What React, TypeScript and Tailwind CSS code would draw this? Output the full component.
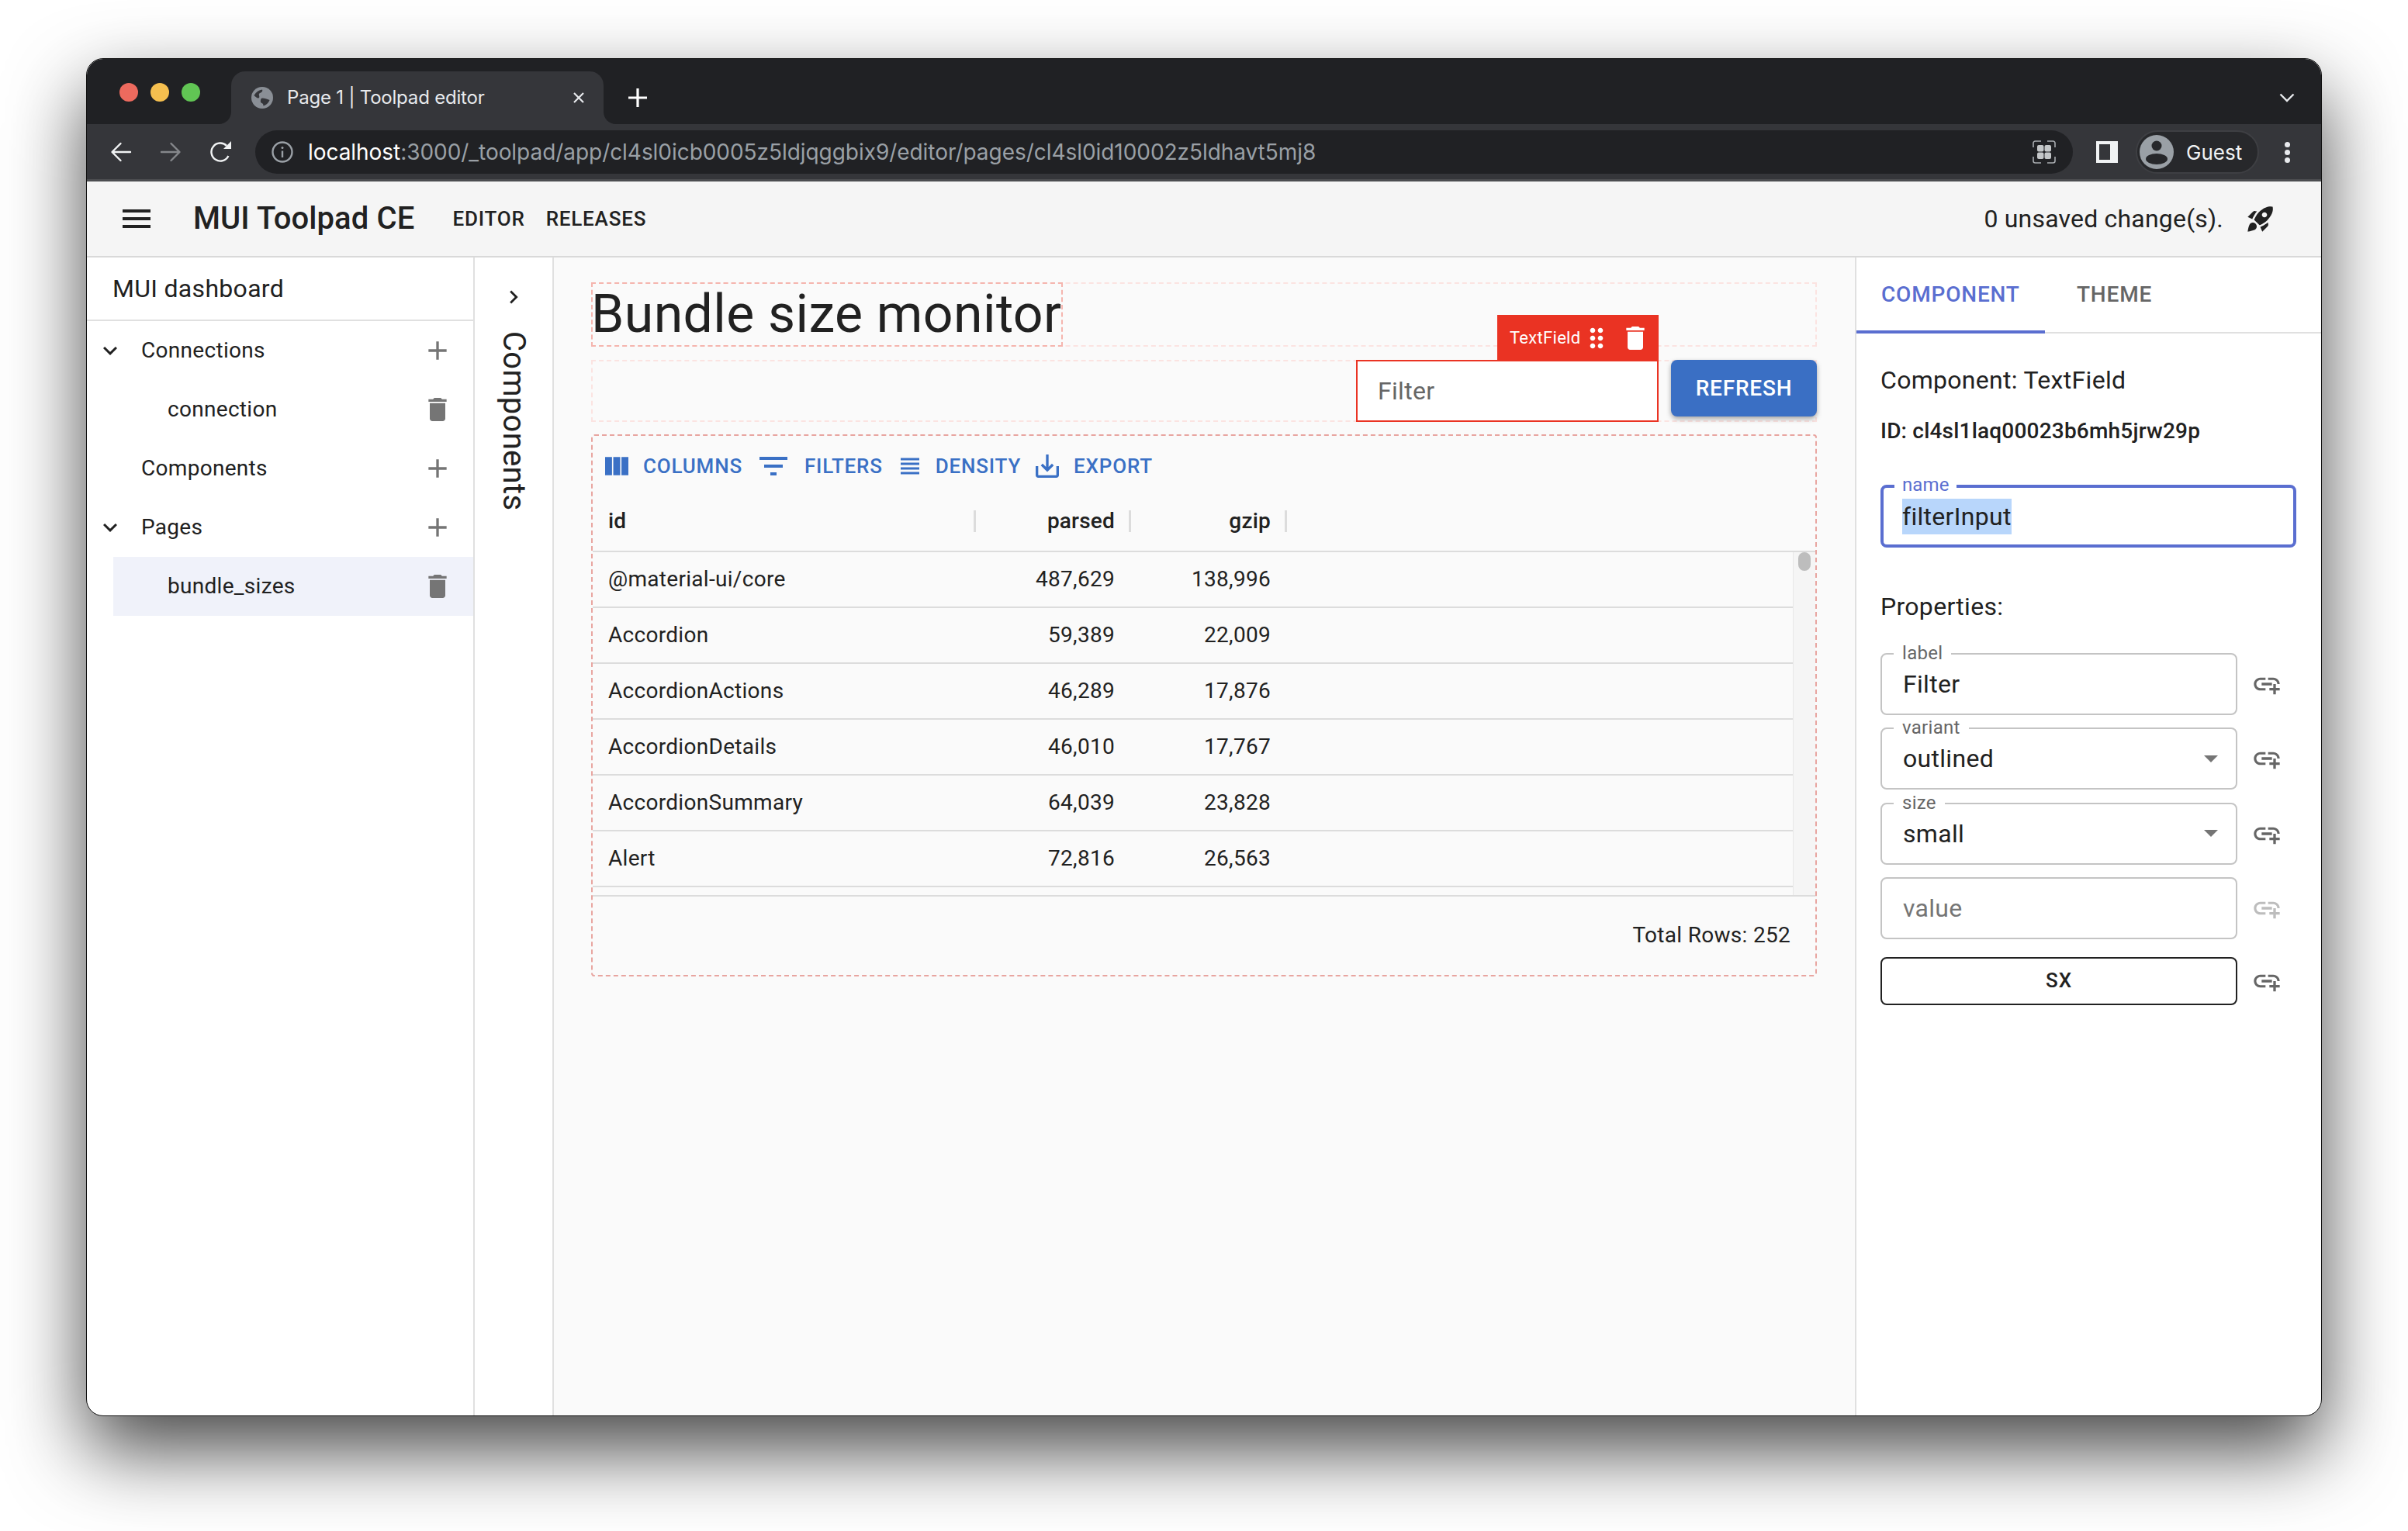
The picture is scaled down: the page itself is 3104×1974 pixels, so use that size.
import React from "react";

const P = {
  menu: "M3 18h18v-2H3v2zm0-5h18v-2H3v2zm0-7v2h18V6H3z",
  add: "M19 13h-6v6h-2v-6H5v-2h6V5h2v6h6v2z",
  del: "M6 19c0 1.1.9 2 2 2h8c1.1 0 2-.9 2-2V7H6v12zM19 4h-3.5l-1-1h-5l-1 1H5v2h14V4z",
  more: "M16.59 8.59 12 13.17 7.41 8.59 6 10l6 6 6-6z",
  right: "M10 6 8.59 7.41 13.17 12l-4.58 4.59L10 18l6-6z",
  rocket: "M9.19 6.35c-2.04 2.29-3.44 5.58-3.57 5.89L2 10.69l4.05-4.05c.47-.47 1.15-.68 1.81-.55l1.33.26zM11.17 17s3.74-1.55 5.89-3.7c5.4-5.4 4.5-9.62 4.21-10.57-.95-.3-5.17-1.19-10.57 4.21C8.55 9.09 7 12.83 7 12.83L11.17 17zm6.48-2.19c-2.29 2.04-5.58 3.44-5.89 3.57L13.31 22l4.05-4.05c.47-.47.68-1.15.55-1.81l-.26-1.33zM9 18c0 .83-.34 1.58-.88 2.12C6.94 21.3 2 22 2 22s.7-4.94 1.88-6.12C4.42 15.34 5.17 15 6 15c1.66 0 3 1.34 3 3zm4-9c0-1.1.9-2 2-2s2 .9 2 2-.9 2-2 2-2-.9-2-2z",
  cols: "M14.67 5v14H9.33V5h5.34zm1 14H21V5h-5.33v14zm-7.34 0V5H3v14h5.33z",
  filter: "M10 18h4v-2h-4v2zM3 6v2h18V6H3zm3 7h12v-2H6v2z",
  density: "M4 15h16v-2H4v2zm0 4h16v-2H4v2zm0-8h16V9H4v2zm0-6v2h16V5H4z",
  save: "M19 12v7H5v-7H3v7c0 1.1.9 2 2 2h14c1.1 0 2-.9 2-2v-7h-2zm-6 .67l2.59-2.58L17 11.5l-5 5-5-5 1.41-1.41L11 12.67V3h2z",
  drag: "M11 18c0 1.1-.9 2-2 2s-2-.9-2-2 .9-2 2-2 2 .9 2 2zm-2-8c-1.1 0-2 .9-2 2s.9 2 2 2 2-.9 2-2-.9-2-2-2zm0-6c-1.1 0-2 .9-2 2s.9 2 2 2 2-.9 2-2-.9-2-2-2zm6 4c1.1 0 2-.9 2-2s-.9-2-2-2-2 .9-2 2 .9 2 2 2zm0 2c-1.1 0-2 .9-2 2s.9 2 2 2 2-.9 2-2-.9-2-2-2zm0 6c-1.1 0-2 .9-2 2s.9 2 2 2 2-.9 2-2-.9-2-2-2z",
  link: "M8 11h8v2H8zm12.1 1H22c0-2.76-2.24-5-5-5h-4v1.9h4c1.71 0 3.1 1.39 3.1 3.1zM3.9 12c0-1.71 1.39-3.1 3.1-3.1h4V7H7c-2.76 0-5 2.24-5 5s2.24 5 5 5h4v-1.9H7c-1.71 0-3.1-1.39-3.1-3.1zM19 12h-2v3h-3v2h3v3h2v-3h3v-2h-3z",
};

function I({ d, className }: { d: string; className: string }) {
  return (
    <svg viewBox="0 0 24 24" fill="currentColor" className={"shrink-0 " + className}>
      <path d={d} />
    </svg>
  );
}

function Stroke({ children, className }: { children: React.ReactNode; className: string }) {
  return (
    <svg viewBox="0 0 28 28" fill="none" stroke="currentColor" strokeWidth="2.4" strokeLinecap="round" strokeLinejoin="round" className={"shrink-0 " + className}>
      {children}
    </svg>
  );
}

function Flare({ side }: { side: "l" | "r" }) {
  return (
    <svg
      viewBox="0 0 16 16"
      className={side === "l" ? "absolute bottom-0 -left-[16px] w-[16px] h-[16px]" : "absolute bottom-0 -right-[16px] w-[16px] h-[16px]"}
    >
      <path d={side === "l" ? "M16 0V16H0C9 16 16 9 16 0Z" : "M0 0V16H16C7 16 0 9 0 0Z"} fill="#35363a" />
    </svg>
  );
}

function TreeRow({ label, chevron }: { label: string; chevron?: boolean }) {
  return (
    <div className={chevron ? "flex items-center h-[76px] pl-[12px] pr-[26px]" : "flex items-center h-[76px] pl-[70px] pr-[26px]"}>
      {chevron && <I d={P.more} className="w-[36px] h-[36px] mr-[22px] text-[#212121]" />}
      <span className="flex-1 text-[28px] tracking-[0.3px] pb-[1px]">{label}</span>
      <I d={P.add} className="w-[40px] h-[40px] text-[#757575]" />
    </div>
  );
}

function TreeLeaf({ label, selected }: { label: string; selected?: boolean }) {
  return (
    <div className={selected ? "flex items-center h-[76px] ml-[34px] pl-[70px] pr-[26px] bg-[#f0f2fa]" : "flex items-center h-[76px] ml-[34px] pl-[70px] pr-[26px]"}>
      <span className="flex-1 text-[28px] tracking-[0.3px] pb-[1px]">{label}</span>
      <I d={P.del} className="w-[40px] h-[40px] text-[#757575]" />
    </div>
  );
}

function ToolBtn({ d, label, icon, gap }: { d: string; label: string; icon: string; gap: string }) {
  return (
    <div className="flex items-center text-[#3a70c5]">
      <I d={d} className={icon} />
      <span className={"text-[26px] font-medium tracking-[0.8px] " + gap}>{label}</span>
    </div>
  );
}

const rows = [
  ["@material-ui/core", "487,629", "138,996"],
  ["Accordion", "59,389", "22,009"],
  ["AccordionActions", "46,289", "17,876"],
  ["AccordionDetails", "46,010", "17,767"],
  ["AccordionSummary", "64,039", "23,828"],
  ["Alert", "72,816", "26,563"],
];

function Field({ label, value, placeholder, select, faint }: { label?: string; value?: string; placeholder?: string; select?: boolean; faint?: boolean }) {
  return (
    <div className="flex items-center mb-[16.4px]">
      <div className="relative flex items-center w-[460px] h-[80px] border-2 border-[#c4c4c4] rounded-[8px] pl-[27px] pr-[23px] text-[32px] tracking-[0.3px]">
        {label && (
          <span className="absolute -top-[16px] left-[15px] px-[11px] bg-white text-[24px] leading-[28px] text-[#666666]">{label}</span>
        )}
        <span className={placeholder ? "flex-1 text-[#757575]" : "flex-1"}>{value ?? placeholder}</span>
        {select && (
          <svg viewBox="0 0 20 10" className="w-[18px] h-[9px] text-[#757575]" fill="currentColor">
            <path d="M0 0h20L10 10z" />
          </svg>
        )}
      </div>
      <I d={P.link} className={faint ? "ml-[18px] w-[40px] h-[40px] text-[#bdbdbd]" : "ml-[18px] w-[40px] h-[40px] text-[#666666]"} />
    </div>
  );
}

export default function App() {
  return (
    <div className="w-[3104px] h-[1974px] overflow-hidden bg-white pt-[75px] pl-[111px] text-[#212121] font-['Roboto',sans-serif]">
      <div className="w-[2882px] h-[1751px] rounded-[22px] overflow-hidden border border-[#111111] bg-white flex flex-col shadow-[0_44px_100px_rgba(0,0,0,0.72)]">
        {/* tab strip */}
        <div className="h-[84px] shrink-0 bg-[#202124] flex items-end relative">
          <div className="flex items-center gap-[16px] pl-[42px] pr-[40px] self-start pt-[31px]">
            <div className="w-[24px] h-[24px] rounded-full bg-[#ed6a5e]" />
            <div className="w-[24px] h-[24px] rounded-full bg-[#f5bf4f]" />
            <div className="w-[24px] h-[24px] rounded-full bg-[#61c554]" />
          </div>
          <div className="relative w-[480px] h-[68px] bg-[#35363a] rounded-t-[18px] flex items-center pl-[26px] pr-[20px] text-white">
            <Flare side="l" />
            <Flare side="r" />
            <svg viewBox="0 0 28 28" className="w-[28px] h-[28px] shrink-0">
              <circle cx="14" cy="14" r="14" fill="#8a8f96" />
              <path d="M3.500 11C6 6.500 10 4 14 3.500c1 2-1 4-3 4.500-1 .3-1.500 1.500-1 3 .5 2 .5 3.500-1 3.500-2 0-4-2-5.500-3.500z" fill="#35363a" />
              <path d="M14 14.500c3 0 6 1 9.500 2.500-1 3-4 6.500-8 7.500 0-2-.5-3-2-3.500-1.500-.5-2-2-1.500-4 .2-1.500.8-2.500 2-2.500z" fill="#35363a" />
            </svg>
            <span className="flex-1 ml-[18px] text-[24px] tracking-[-0.2px] text-[#e8eaed] font-['Inter',sans-serif]">Page 1 | Toolpad editor</span>
            <svg viewBox="0 0 16 16" className="w-[16px] h-[16px] mr-[4px]" stroke="#e8eaed" strokeWidth="2.2">
              <path d="M2 2l12 12M14 2L2 14" />
            </svg>
          </div>
          <svg viewBox="0 0 24 24" className="ml-[32px] mb-[22px] w-[24px] h-[24px]" stroke="#ffffff" strokeWidth="3.2">
            <path d="M12 0v24M0 12h24" />
          </svg>
          <div className="flex-1" />
          <svg viewBox="0 0 20 12" className="mr-[34px] mb-[28px] w-[20px] h-[12px]" fill="none" stroke="#e8eaed" strokeWidth="2.4">
            <path d="M1.5 1.5L10 10l8.500-8.500" />
          </svg>
        </div>
        {/* url toolbar */}
        <div className="h-[74px] shrink-0 bg-[#35363a] border-b-[3px] border-[#4c4d50] flex items-start pt-[8px]">
          <div className="flex items-center h-[56px] pl-[30px]">
            <Stroke className="w-[28px] h-[28px] text-[#f1f3f4]">
              <path d="M26 14H3M13.500 3L2.500 14l11 11" />
            </Stroke>
            <Stroke className="ml-[36px] w-[28px] h-[28px] text-[#85878b]">
              <path d="M2 14h23M14.500 3l11 11-11 11" />
            </Stroke>
            <svg viewBox="0 0 30 30" className="ml-[36px] w-[30px] h-[30px] shrink-0" fill="none" stroke="#f1f3f4" strokeWidth="2.4">
              <path d="M24.400 19.900A11.500 11.500 0 1 1 22.100 6.900" />
              <path d="M28 1v10H18z" fill="#f1f3f4" stroke="none" />
            </svg>
          </div>
          <div className="ml-[29px] w-[2343px] h-[56px] bg-[#202124] rounded-full flex items-center pl-[21px] pr-[22px]">
            <svg viewBox="0 0 28 28" className="w-[28px] h-[28px] shrink-0" fill="none" stroke="#9aa0a6" strokeWidth="2.4">
              <circle cx="14" cy="14" r="12.500" />
              <path d="M14 12.500V21" />
              <circle cx="14" cy="8.500" r="1.500" fill="#9aa0a6" stroke="none" />
            </svg>
            <span className="ml-[19px] flex-1 text-[28px] tracking-[-0.05px] text-[#9aa0a6] font-['Inter',sans-serif]">
              <span className="text-white">localhost</span>:3000/_toolpad/app/cl4sl0icb0005z5ldjqggbix9/editor/pages/cl4sl0id10002z5ldhavt5mj8
            </span>
            <svg viewBox="0 0 30 30" className="w-[30px] h-[30px] shrink-0" fill="none" stroke="#a9adb1" strokeWidth="1.600">
              <path d="M1 9V3.500A2.500 2.500 0 0 1 3.500 1H11M19 1h7.500A2.500 2.500 0 0 1 29 3.500V9M29 21v5.500a2.500 2.500 0 0 1-2.500 2.500H19M11 29H3.500A2.500 2.500 0 0 1 1 26.500V21" />
              <rect x="6" y="6" width="8.500" height="8.500" rx="2" fill="#c4c7c9" stroke="none" />
              <rect x="15.500" y="6" width="8.500" height="8.500" rx="2" fill="#c4c7c9" stroke="none" />
              <rect x="6" y="15.500" width="8.500" height="8.500" rx="2" fill="#c4c7c9" stroke="none" />
              <rect x="15.500" y="15.500" width="8.500" height="8.500" rx="2" fill="#c4c7c9" stroke="none" />
            </svg>
          </div>
          <svg viewBox="0 0 28 28" className="ml-[30px] mt-[14px] w-[28px] h-[28px] shrink-0">
            <path d="M0 0h28v28H0z" fill="#f1f3f4" />
            <path d="M4 4h14v20H4z" fill="#35363a" />
          </svg>
          <div className="ml-[23px] w-[159px] h-[56px] rounded-full bg-[#27282b] border-2 border-[#3e3f43] flex items-center pl-[3px]">
            <svg viewBox="0 0 44 44" className="w-[44px] h-[44px] shrink-0">
              <circle cx="22" cy="22" r="22" fill="#9aa0a6" />
              <circle cx="22" cy="14" r="6.500" fill="#27282b" />
              <ellipse cx="22" cy="31" rx="14" ry="7" fill="#27282b" />
            </svg>
            <span className="ml-[16px] text-[26px] text-[#f1f3f4] font-['Inter',sans-serif]">Guest</span>
          </div>
          <div className="ml-[33px] mt-[15px] flex flex-col gap-[3px]">
            <div className="w-[7px] h-[7px] rounded-full bg-[#e8eaed]" />
            <div className="w-[7px] h-[7px] rounded-full bg-[#e8eaed]" />
            <div className="w-[7px] h-[7px] rounded-full bg-[#e8eaed]" />
          </div>
        </div>
        {/* app bar */}
        <div className="h-[98px] shrink-0 bg-[#f5f5f5] border-b-2 border-[#d9d9d9] flex items-center pl-[40px] pr-[58px]">
          <I d={P.menu} className="w-[48px] h-[48px] text-[#212121]" />
          <span className="ml-[49px] text-[40px] font-medium tracking-[0.1px]">MUI Toolpad CE</span>
          <span className="ml-[49px] text-[26px] font-medium tracking-[0.8px]">EDITOR</span>
          <span className="ml-[27px] text-[26px] font-medium tracking-[0.8px]">RELEASES</span>
          <span className="flex-1" />
          <span className="text-[32px] tracking-[0.2px]">0 unsaved change(s).</span>
          <I d={P.rocket} className="ml-[28px] w-[40px] h-[40px] text-[#212121]" />
        </div>
        {/* body */}
        <div className="flex flex-1 min-h-0">
          <div className="w-[500px] shrink-0 border-r-2 border-[#e0e0e0] flex flex-col">
            <div className="h-[82px] flex items-center pl-[33px] text-[32px] tracking-[0.3px] border-b-2 border-[#e0e0e0]">MUI dashboard</div>
            <TreeRow label="Connections" chevron />
            <TreeLeaf label="connection" />
            <TreeRow label="Components" />
            <TreeRow label="Pages" chevron />
            <TreeLeaf label="bundle_sizes" selected />
          </div>
          <div className="w-[102px] shrink-0 border-r-2 border-[#e0e0e0] flex flex-col items-center">
            <I d={P.right} className="mt-[34px] w-[34px] h-[34px] text-[#212121]" />
            <span className="mt-[27px] text-[40px] leading-[48px] tracking-[0.3px] [writing-mode:vertical-rl]">Components</span>
          </div>
          {/* canvas */}
          <div className="flex-1 min-w-0 bg-[#fafafa] pl-[48px] pr-[49px] pt-[32px]">
            <div className="h-[83px] border-2 border-dashed border-[#fbe3e1] flex">
              <div className="w-[608px] -my-[2px] -ml-[2px] border-2 border-dashed border-[#f5b5ae] text-[68px] leading-[78px] tracking-[0.4px] -indent-[2px] whitespace-nowrap">Bundle size monitor</div>
            </div>
            <div className="mt-[17px] h-[80px] border-2 border-dashed border-[#fbe3e1] flex justify-end items-start -mb-[2px]">
              <div className="relative -mt-[2px] w-[390px] h-[80px] bg-white border-2 border-[#ea3323] flex items-center pl-[26px] text-[32px] tracking-[0.3px] text-[#666666]">
                <span>Filter</span>
                <div className="absolute -top-[60px] -right-[2px] w-[208px] h-[60px] bg-[#ea3323] flex items-center pl-[16px] text-white">
                  <span className="w-[91px] text-[22px] leading-none">TextField</span>
                  <I d={P.drag} className="ml-[1px] w-[40px] h-[40px]" />
                  <I d={P.del} className="ml-[10px] w-[40px] h-[40px]" />
                </div>
              </div>
              <div className="ml-[16px] -mt-[2px] -mr-[2px] w-[188px] h-[73px] bg-[#3a6fc4] rounded-[8px] shadow-[0_3px_6px_rgba(0,0,0,0.35)] flex items-center justify-center text-white text-[28px] font-medium tracking-[0.8px]">REFRESH</div>
            </div>
            <div className="mt-[18px] h-[699px] border-2 border-dashed border-[#e8a5a0] rounded-[4px] flex flex-col">
              <div className="h-[72px] shrink-0 flex items-center pl-[11px] pt-[6px]">
                <ToolBtn d={P.cols} label="COLUMNS" icon="w-[40px] h-[40px]" gap="ml-[14px]" />
                <ToolBtn d={P.filter} label="FILTERS" icon="ml-[16px] w-[48px] h-[48px]" gap="ml-[16px]" />
                <ToolBtn d={P.density} label="DENSITY" icon="ml-[17px] w-[36px] h-[36px]" gap="ml-[15px]" />
                <ToolBtn d={P.save} label="EXPORT" icon="ml-[14px] w-[40px] h-[40px]" gap="ml-[14px]" />
              </div>
              <div className="h-[78px] shrink-0 border-b-2 border-[#dcdcdc] flex items-center text-[28px] font-medium tracking-[0.2px]">
                <div className="w-[494px] pl-[20px] flex items-center justify-between">
                  <span>id</span>
                  <div className="w-[3px] h-[28px] bg-[#dcdcdc]" />
                </div>
                <div className="w-[200px] flex items-center justify-end gap-[18px]">
                  <span>parsed</span>
                  <div className="w-[3px] h-[28px] bg-[#dcdcdc]" />
                </div>
                <div className="w-[201px] flex items-center justify-end gap-[18px]">
                  <span>gzip</span>
                  <div className="w-[3px] h-[28px] bg-[#dcdcdc]" />
                </div>
              </div>
              <div className="h-[442px] shrink-0 flex">
                <div className="flex-1">
                  {rows.map((r) => (
                    <div key={r[0]} className="h-[72px] border-b-2 border-[#dcdcdc] flex items-center pb-[1px] text-[28px] tracking-[0.3px]">
                      <div className="w-[494px] pl-[20px]">{r[0]}</div>
                      <div className="w-[200px] text-right pr-[21px]">{r[1]}</div>
                      <div className="w-[201px] text-right pr-[21px]">{r[2]}</div>
                    </div>
                  ))}
                </div>
                <div className="w-[29px] bg-[#f5f5f5] border-l border-[#e8e8e8] flex justify-center">
                  <div className="w-[16px] h-[24px] rounded-full bg-[#bdbdbd]" />
                </div>
              </div>
              <div className="flex-1 border-t-2 border-[#dcdcdc] flex items-center justify-end pr-[32px] pb-[2px] text-[28px] tracking-[0.3px]">Total Rows: 252</div>
            </div>
          </div>
          {/* inspector */}
          <div className="w-[601px] shrink-0 border-l-2 border-[#e0e0e0] flex flex-col">
            <div className="h-[98px] shrink-0 border-b-2 border-[#e0e0e0] flex text-[28px] font-medium tracking-[0.8px]">
              <div className="w-[243px] h-[98px] border-b-4 border-[#5a6ed0] flex items-center pl-[32px] pt-[2px] text-[#5a6ed0]">COMPONENT</div>
              <div className="ml-[41px] h-[94px] flex items-center pt-[2px] text-[#666666]">THEME</div>
            </div>
            <div className="pl-[31px] flex flex-col">
              <div className="mt-[38px] text-[32px] leading-[44px] tracking-[0.3px]">Component: TextField</div>
              <div className="mt-[24px] text-[28px] leading-[40px] font-medium tracking-[0.2px]">ID: cl4sl1laq00023b6mh5jrw29p</div>
              <div className="relative mt-[49px] w-[536px] h-[81px] border-4 border-[#5a6ed0] rounded-[8px] flex items-center pl-[24px] text-[32px] tracking-[0.3px]">
                <span className="absolute -top-[18px] left-[14px] px-[10px] bg-white text-[24px] leading-[28px] tracking-[0.1px] text-[#5a6ed0]">name</span>
                <span className="bg-[#b8d6fb] leading-[46px]">filterInput</span>
              </div>
              <div className="mt-[54px] text-[32px] leading-[44px] tracking-[0.3px]">Properties:</div>
              <div className="mt-[38px]">
                <Field label="label" value="Filter" />
                <Field label="variant" value="outlined" select />
                <Field label="size" value="small" select />
                <Field placeholder="value" faint />
              </div>
              <div className="flex items-center mt-[6px]">
                <div className="w-[460px] h-[62px] border-2 border-[#212121] rounded-[8px] flex items-center justify-center text-[26px] font-medium tracking-[0.8px]">SX</div>
                <I d={P.link} className="ml-[18px] w-[40px] h-[40px] text-[#666666]" />
              </div>
            </div>
          </div>
        </div>
      </div>
    </div>
  );
}
